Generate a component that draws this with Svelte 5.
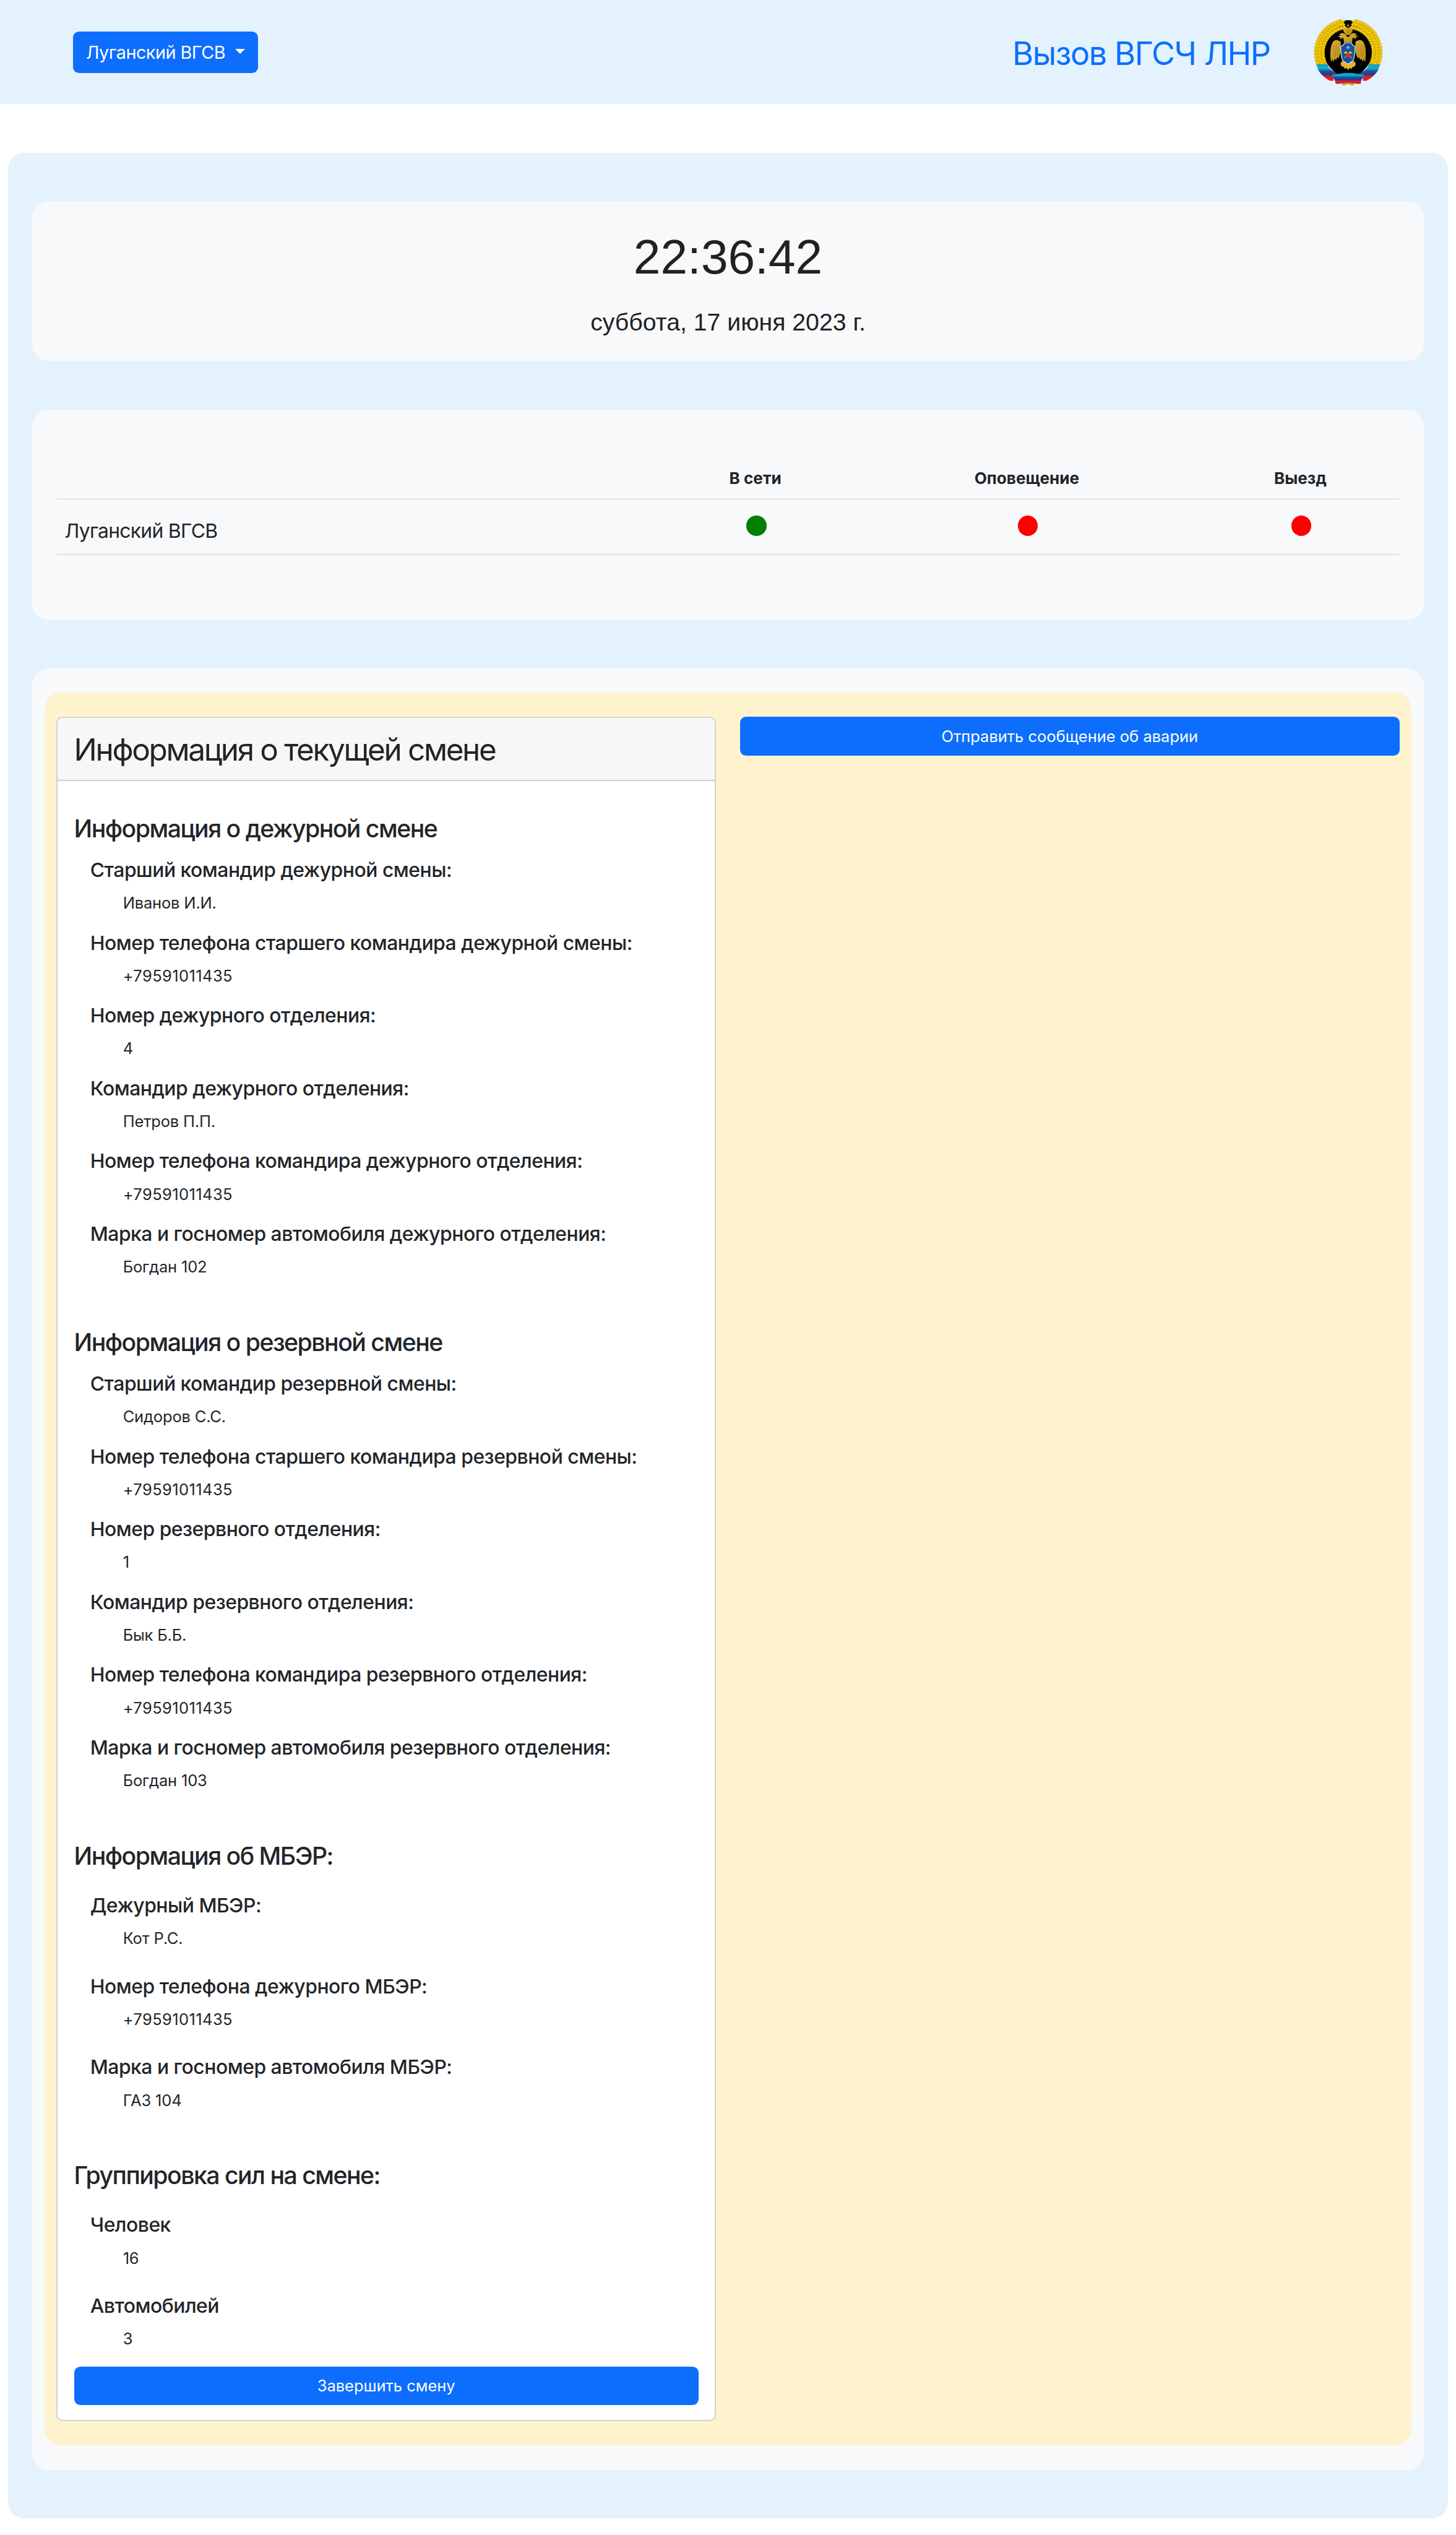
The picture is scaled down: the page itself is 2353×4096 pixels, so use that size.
<script>
  const statuses = [
    { label: 'В сети', on: true },
    { label: 'Оповещение', on: false },
    { label: 'Выезд', on: false }
  ];

  const phone = '+79591011435';

  const sections = [
    {
      title: 'Информация о дежурной смене',
      rows: [
        ['Старший командир дежурной смены:', 'Иванов И.И.'],
        ['Номер телефона старшего командира дежурной смены:', phone],
        ['Номер дежурного отделения:', '4'],
        ['Командир дежурного отделения:', 'Петров П.П.'],
        ['Номер телефона командира дежурного отделения:', phone],
        ['Марка и госномер автомобиля дежурного отделения:', 'Богдан 102']
      ]
    },
    {
      title: 'Информация о резервной смене',
      rows: [
        ['Старший командир резервной смены:', 'Сидоров С.С.'],
        ['Номер телефона старшего командира резервной смены:', phone],
        ['Номер резервного отделения:', '1'],
        ['Командир резервного отделения:', 'Бык Б.Б.'],
        ['Номер телефона командира резервного отделения:', phone],
        ['Марка и госномер автомобиля резервного отделения:', 'Богдан 103']
      ]
    },
    {
      title: 'Информация об МБЭР:',
      loose: true,
      rows: [
        ['Дежурный МБЭР:', 'Кот Р.С.'],
        ['Номер телефона дежурного МБЭР:', phone],
        ['Марка и госномер автомобиля МБЭР:', 'ГАЗ 104']
      ]
    },
    {
      title: 'Группировка сил на смене:',
      loose: true,
      rows: [
        ['Человек', '16'],
        ['Автомобилей', '3']
      ]
    }
  ];

  // Leaves of the wreath: three staggered rings of small ellipses.
  const leaves = [];
  [151, 172, 192].forEach((r, ring) => {
    for (let a = -82; a <= 22; a += 6) {
      const deg = a + ring * 2.5;
      const t = (deg * Math.PI) / 180;
      const x = r * Math.cos(t);
      const y = 284 + r * Math.sin(t);
      if (y < 350) {
        leaves.push({ x: 320 + x, y, rot: deg + 50 });
        leaves.push({ x: 320 - x, y, rot: 130 - deg });
      }
    }
  });
</script>

<header class="navbar">
  <button class="btn dropdown" type="button">Луганский ВГСВ<span class="caret"></span></button>
  <div class="brand">
    <span class="brand-name">Вызов ВГСЧ ЛНР</span>
    <svg class="emblem" viewBox="115 82 410 398" aria-hidden="true">
      <defs>
        <linearGradient id="ribbon" x1="0" y1="0" x2="0" y2="1">
          <stop offset="0" stop-color="#0799c9" />
          <stop offset=".2" stop-color="#12afd4" />
          <stop offset=".36" stop-color="#087fae" />
          <stop offset=".38" stop-color="#2b4c98" />
          <stop offset=".66" stop-color="#303485" />
          <stop offset=".69" stop-color="#c92138" />
          <stop offset="1" stop-color="#e11e27" />
        </linearGradient>
        <linearGradient id="gold" x1="0" y1="0" x2="1" y2="1">
          <stop offset="0" stop-color="#dcae2e" />
          <stop offset="1" stop-color="#b98c20" />
        </linearGradient>
      </defs>
      <path d="M282 462h74l-4 16-14 2-8-7h-22l-8 7-14-2z" fill="#d9ab18" />
      <path d="M300 94C205 96 124 170 124 275c0 40 8 62 12 80h368c4-18 12-40 12-80C516 170 435 96 340 94z" fill="#dcb007" />
      <path d="M302 92h36c8 24 32 32 50 46 22 14 26 34 42 54 24 24 28 50 32 86 0 52-22 84-50 112l-40 40H268l-40-40c-28-28-50-60-50-112 4-36 8-62 32-86 16-20 20-40 42-54 18-14 42-22 50-46z" fill="#000" />
      {#each leaves as leaf}
        <ellipse cx={leaf.x} cy={leaf.y} rx="14" ry="8.5" transform="rotate({leaf.rot} {leaf.x} {leaf.y})" fill="#f3c806" stroke="#b89108" stroke-width="1.6" />
      {/each}
      <path d="M132 354h66c4 24 28 44 60 54l-28 20 4 22-20 2c-46-22-78-60-82-98z" fill="url(#ribbon)" />
      <path d="M508 354h-66c-4 24-28 44-60 54l28 20-4 22 20 2c46-22 78-60 82-98z" fill="url(#ribbon)" />
      <path d="M224 414c26 2 44-10 96-10s70 12 96 10c-8 16-8 24-18 32l-4 24c-24 0-40-5-74-5s-50 5-74 5l-6-24c-10-8-8-16-16-32z" fill="url(#ribbon)" />
      <g fill="url(#gold)">
        <path d="M318 113h4v8h6v4h-6v9h-4v-9h-6v-4h6z" />
        <path d="M304 172c-12-10-18-22-8-32 8-6 16-6 23-2 8-4 16-4 22 2 10 10 5 22-7 32l-4 8h-22z" />
        <path d="M312 222c-12-8-20-14-22-26l-20 8 4-10-18-6 20-6-10-8c16-8 28-8 36 0l10 14 6 4 8-4 10-14c8-8 20-8 36 0l-10 8 20 6-18 6 4 10-20-8c-2 12-10 18-22 26z" />
        <path d="M294 222v-30h50v30z" />
        <path d="M276 220c-26-20-46-10-54 16-8 22-10 64-4 104l10-18 4 18 10-22 4 12 10-20 6 10 14-38z" />
        <path d="M363 220c26-20 46-10 54 16 8 22 10 64 4 104l-10-18-4 18-10-22-4 12-10-20-6 10-14-38z" />
        <path d="M280 336c-6 10-6 20 0 28l14 6 6 10 12-4 8 12 8-12 12 4 6-10 14-6c6-8 4-18-2-28z" fill="#e6b327" />
      </g>
      <path d="M236 238l-6 70M250 236l-8 74M264 244l-8 64M403 238l6 70M389 236l8 74M375 244l8 64" stroke="#8c6914" stroke-width="2" fill="none" />
      <path d="M320 144v32M308 150l6 22M331 150l-6 22" stroke="#8c6914" stroke-width="2" fill="none" />
      <path d="M298 226h42c2 10 8 18 22 22-6 38-2 70-14 84-8 10-20 14-29 20-9-6-22-10-30-20-12-14-10-46-15-84 14-4 22-12 24-22z" fill="#17539a" stroke="#d3deea" stroke-width="5" />
      <path d="M319 240l4 10 10 4-10 4-4 10-4-10-10-4 10-4z" fill="#b3a6bd" />
      <path d="M298 314l34-30M340 314l-34-30" stroke="#e7c62e" stroke-width="5" />
      <path d="M293 288l12-12 10 6-14 8zM345 288l-12-12-10 6 14 8z" fill="#f4db26" />
      <path d="M318 284l5 9 10-2-4 10 4 10-10-1-5 8-5-8-10 1 4-10-4-10 10 2z" fill="#e6241f" />
    </svg>
  </div>
</header>

<main class="shell">
  <section class="panel clock">
    <div class="time">22:36:42</div>
    <div class="date">суббота, 17 июня 2023 г.</div>
  </section>

  <section class="panel status">
    <div class="grid head">
      <span></span>
      {#each statuses as s}
        <span class="th">{s.label}</span>
      {/each}
    </div>
    <div class="grid row">
      <span class="unit">Луганский ВГСВ</span>
      {#each statuses as s}
        <span class="cell"><i class="dot" class:on={s.on}></i></span>
      {/each}
    </div>
  </section>

  <section class="panel work">
    <div class="board">
      <article class="card">
        <h2>Информация о текущей смене</h2>
        <div class="card-body">
          {#each sections as sec}
            <section class="group" class:loose={sec.loose}>
              <h4>{sec.title}</h4>
              <dl>
                {#each sec.rows as [name, value]}
                  <div class="item">
                    <dt>{name}</dt>
                    <dd class:phone={value === phone}>{value}</dd>
                  </div>
                {/each}
              </dl>
            </section>
          {/each}
          <button class="btn wide" type="button">Завершить смену</button>
        </div>
      </article>
      <div class="actions">
        <button class="btn wide" type="button">Отправить сообщение об аварии</button>
      </div>
    </div>
  </section>
</main>

<style>
  /* 1rem is a 144th of the page width, so sizes read as tens of layout pixels. */
  :global(html) {
    font-size: calc(100vw / 144);
    overflow: hidden;
  }
  :global(body) {
    margin: 0;
    background: #fff;
    color: #212529;
    font-family: Inter, 'Liberation Sans', sans-serif;
  }
  * {
    box-sizing: border-box;
  }
  .navbar {
    height: 10.3rem;
    padding: 0 7.2rem;
    display: flex;
    align-items: center;
    justify-content: space-between;
    background: #e3f2fd;
  }
  .btn {
    border: 0;
    border-radius: 0.6rem;
    background: #0d6efd;
    color: #fff;
    font-family: inherit;
    white-space: nowrap;
  }
  .dropdown {
    width: 18.35rem;
    height: 4.1rem;
    padding: 0 1.3rem;
    display: flex;
    align-items: center;
    justify-content: space-between;
    font-size: 1.76rem;
    letter-spacing: -0.03rem;
  }
  .caret {
    margin-top: -0.2rem;
    border-top: 0.5rem solid #fff;
    border-left: 0.5rem solid transparent;
    border-right: 0.5rem solid transparent;
  }
  .brand {
    display: flex;
    align-items: center;
    gap: 4.3rem;
  }
  .brand-name {
    padding-top: 0.18rem;
    color: #0d6efd;
    font-size: 3.2rem;
    letter-spacing: -0.092rem;
    white-space: nowrap;
  }
  .emblem {
    width: 6.83rem;
    height: 6.63rem;
    margin-right: 0.05rem;
  }
  .shell {
    margin: 4.8rem 0.8rem 0;
    padding: 4.8rem 2.4rem;
    display: grid;
    gap: 4.8rem;
    border-radius: 1.6rem;
    background: #e3f2fd;
  }
  .panel {
    border-radius: 1.6rem;
    background: #f8f9fa;
  }
  .clock {
    height: 15.8rem;
    padding-top: 2.6rem;
    text-align: center;
    color: #212121;
    font-family: 'Liberation Sans', Arial, sans-serif;
  }
  .time {
    font-size: 4.8rem;
    line-height: 5.8rem;
  }
  .date {
    margin-top: 2.1rem;
    font-size: 2.4rem;
    line-height: 2.9rem;
  }
  .status {
    height: 20.8rem;
    padding: 4.8rem 2.4rem 0;
  }
  .grid {
    display: grid;
    grid-template-columns: 59.5fr 19.2fr 34.5fr 19.6fr;
    border-bottom: 2px solid #dee2e6;
  }
  .head {
    height: 4.1rem;
    align-items: center;
  }
  .th {
    text-align: center;
    font-size: 1.6rem;
    font-weight: 700;
  }
  .row {
    height: 5.5rem;
  }
  .unit {
    padding: 1.6rem 0 0 0.8rem;
    font-size: 1.95rem;
    letter-spacing: -0.045rem;
    line-height: 3rem;
  }
  .cell {
    padding: 1.6rem 0 0 0.2rem;
    display: flex;
    justify-content: center;
  }
  .dot {
    width: 2rem;
    height: 2rem;
    border-radius: 50%;
    background: #f00;
  }
  .dot.on {
    background: #008000;
  }
  .work {
    padding: 2.4rem 1.2rem;
  }
  .board {
    padding: 2.4rem 1.2rem;
    display: grid;
    grid-template-columns: 1fr 1fr;
    gap: 2.4rem;
    border-radius: 1.6rem;
    background: #fff3cd;
  }
  .card {
    border: 2px solid #d0d1d2;
    border-radius: 0.6rem;
    background: #fff;
    overflow: hidden;
  }
  h2 {
    margin: 0;
    height: 6.2rem;
    padding: 0.1rem 1.6rem 0;
    border-bottom: 2px solid #cfd0d1;
    background: #f7f7f7;
    font-size: 3.03rem;
    font-weight: 400;
    letter-spacing: -0.145rem;
    line-height: 6.1rem;
    white-space: nowrap;
  }
  .card-body {
    padding: 3.2rem 1.6rem 1.5rem;
  }
  .group {
    margin-bottom: 3.2rem;
  }
  .group:last-of-type {
    margin-bottom: 0;
  }
  h4 {
    margin: 0 0 1.5rem;
    padding-top: 0.1rem;
    font-size: 2.4rem;
    font-weight: 500;
    letter-spacing: -0.093rem;
    line-height: 2.8rem;
  }
  dl {
    margin: 0;
    padding-left: 1.6rem;
  }
  .item {
    height: 7.2rem;
  }
  .loose .item {
    height: 8rem;
    padding-top: 0.8rem;
  }
  dt {
    font-size: 1.95rem;
    font-weight: 500;
    letter-spacing: -0.03rem;
    line-height: 2.4rem;
  }
  dd {
    margin: 0.86rem 0 0 3.24rem;
    font-size: 1.56rem;
    letter-spacing: -0.01rem;
    line-height: 2.4rem;
  }
  .phone {
    letter-spacing: 0.025rem;
  }
  .wide {
    display: block;
    width: 100%;
    height: 3.8rem;
    font-size: 1.56rem;
  }
</style>
